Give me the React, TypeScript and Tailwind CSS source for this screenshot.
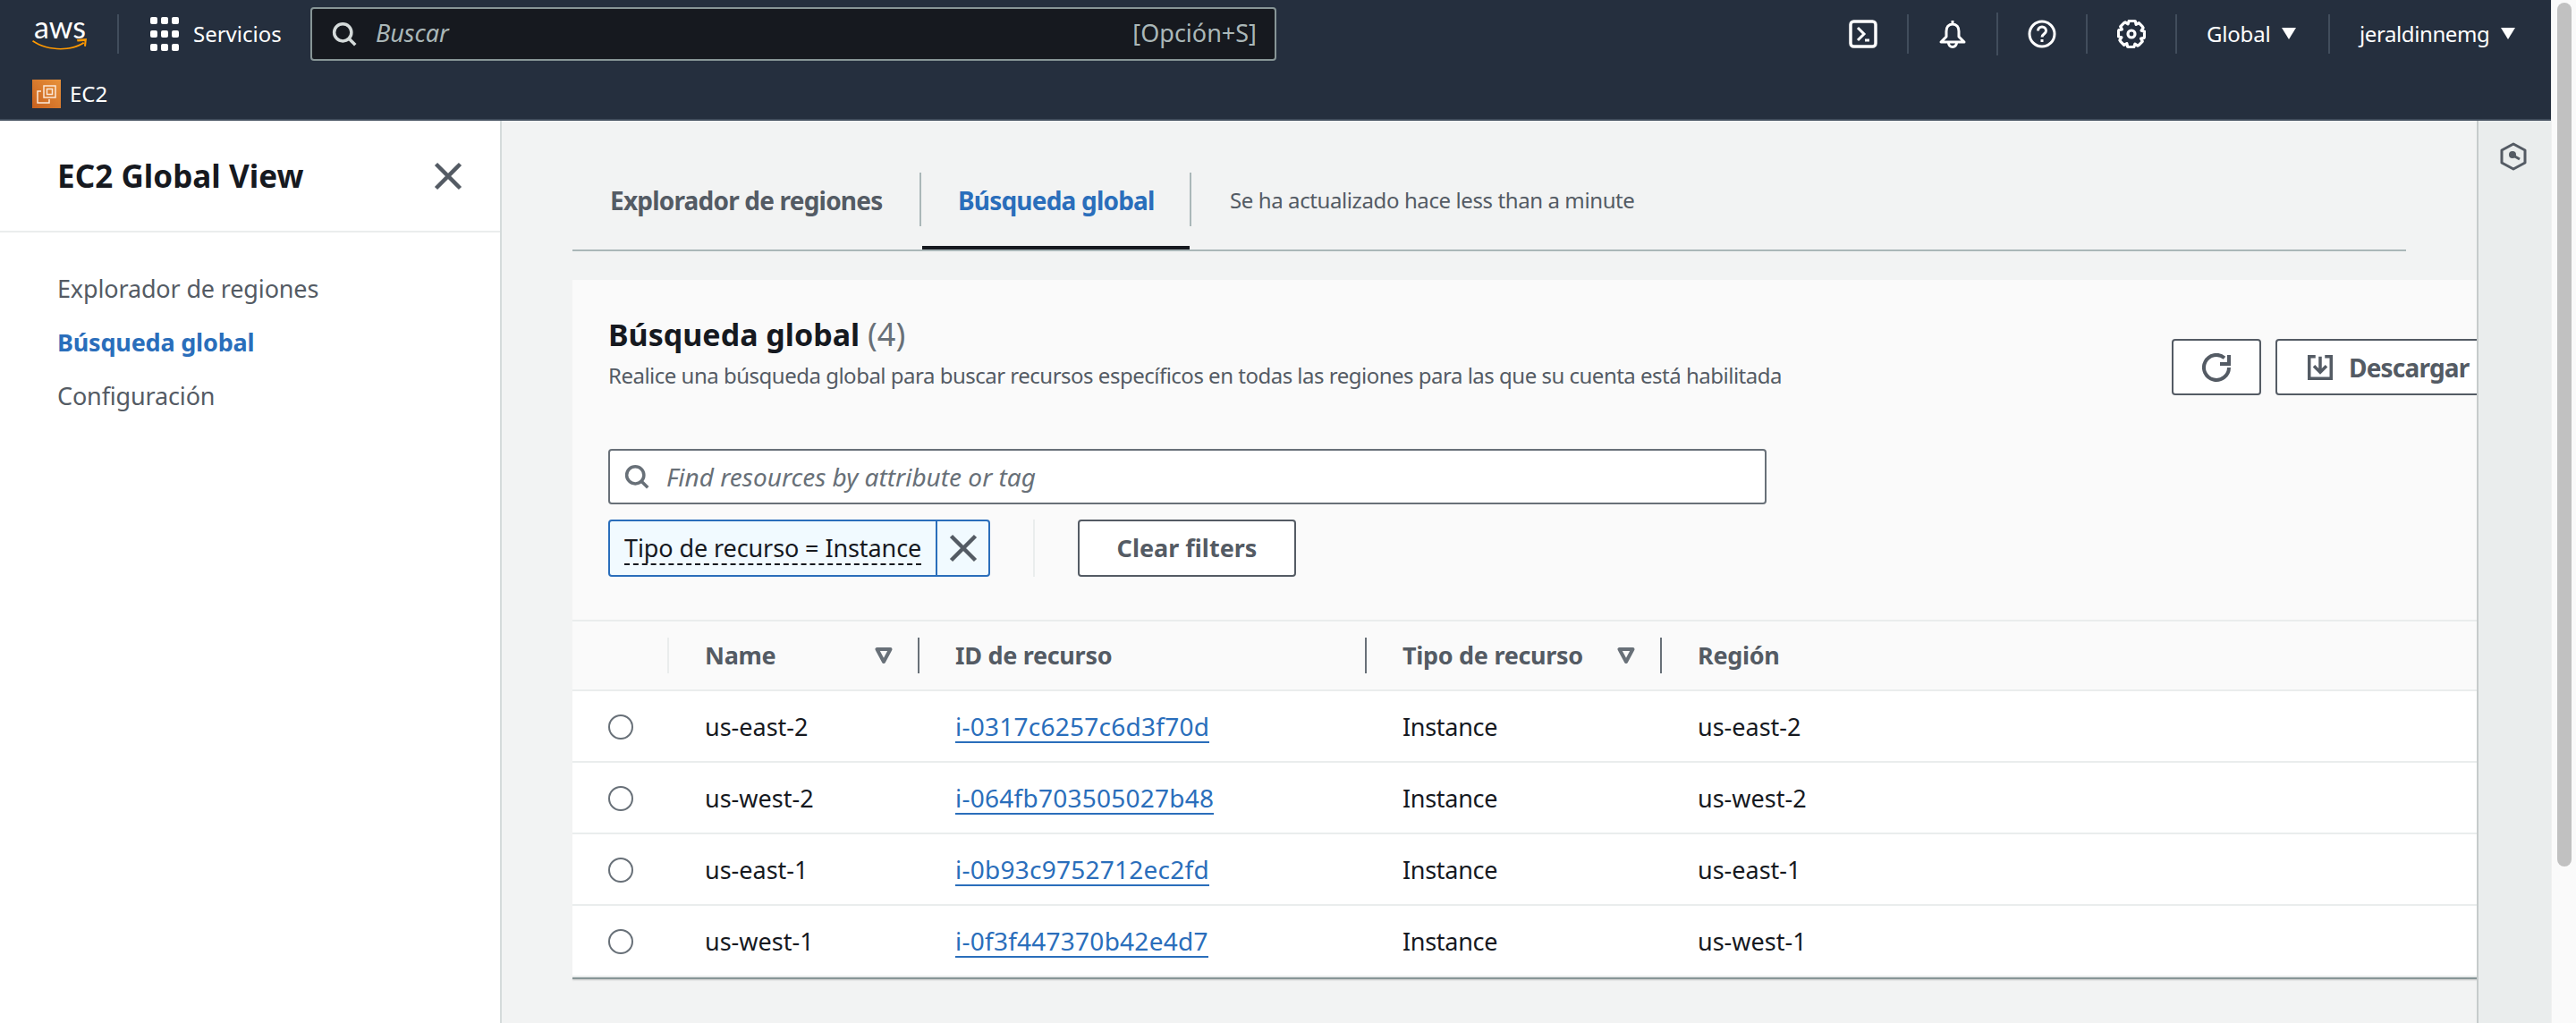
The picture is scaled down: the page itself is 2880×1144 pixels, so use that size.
import React from 'react';

const stroke = { fill: 'none', stroke: 'currentColor', strokeWidth: 2, strokeLinecap: 'round', strokeLinejoin: 'round' } as const;

const Icon: React.FC<{ className?: string; children: React.ReactNode; sw?: number }> = ({ className, children, sw = 2 }) => (
  <svg viewBox="0 0 16 16" className={className} {...stroke} strokeWidth={sw}>
    {children}
  </svg>
);

const SearchIcon: React.FC<{ className?: string }> = ({ className }) => (
  <Icon className={className}>
    <circle cx="7" cy="7" r="5.5" />
    <path d="m15 15-4.2-4.2" strokeLinecap="butt" />
  </Icon>
);

const CloseIcon: React.FC<{ className?: string }> = ({ className }) => (
  <Icon className={className}>
    <path d="m2 2 12 12M14 2 2 14" strokeLinecap="butt" />
  </Icon>
);

const Caret = () => (
  <svg viewBox="0 0 16 13" className="w-4 h-[13px] shrink-0 fill-white">
    <path d="M0 0h16L8 13z" />
  </svg>
);

const FilterCaret = () => (
  <svg viewBox="0 0 20 20" className="w-5 h-5 shrink-0 text-[#687078]" fill="none" stroke="currentColor" strokeWidth="4">
    <path d="M2.500 3h15L10 17z" strokeLinejoin="round" />
  </svg>
);

// 8 tooth gear outline
const gearPath = () => {
  const pts: string[] = [];
  for (let i = 0; i < 8; i++) {
    const a = (i * Math.PI) / 4;
    [[-0.19, 7.4], [0.19, 7.4], [0.3, 7.4], [0.45, 5.9]].forEach(([o, r]) => {
      pts.push(`${(8 + r * Math.sin(a + o)).toFixed(2)} ${(8 - r * Math.cos(a + o)).toFixed(2)}`);
    });
  }
  return `M${pts.join('L')}z`;
};

const HeaderSep = ({ tall }: { tall?: boolean }) => <div className={`w-0.5 bg-[#414d5c] shrink-0 ${tall ? 'h-12' : 'h-11'}`} />;

const TopBar = () => (
  <div className="h-[135px] bg-[#252f3e] border-b-2 border-[#414d5c] text-white shrink-0">
    <div className="h-[75px] flex items-center pl-9 pr-10">
      <div className="w-[62px] h-[40px] relative shrink-0 -mt-1">
        <span className="block text-center text-[34px] leading-[28px] font-['Lato',sans-serif]">aws</span>
        <svg viewBox="0 0 62 16" className="absolute left-0 top-[26px] w-[62px] h-4" fill="#ff9900">
          <path d="M1 3c16 11 41 12 56 2l1.500 1.500C44 16 17 16 0 4.500z" />
          <path d="M50 2l11-1-1 9-2-.5.500-5.500-8 .5z" />
        </svg>
      </div>
      <div className="w-0.5 h-11 bg-[#414d5c] ml-[33px] mr-[35px] shrink-0" />
      <div className="grid grid-cols-3 gap-[4px] w-8 shrink-0">
        {Array.from({ length: 9 }).map((_, i) => (
          <div key={i} className="h-[8px] w-[8px] bg-white rounded-[2px] my-[1.500px]" />
        ))}
      </div>
      <span className="ml-4 text-[24px] leading-none w-[100px] shrink-0">Servicios</span>
      <div className="ml-[31px] w-[1080px] h-[60px] bg-[#16191f] border-2 border-[#879596] rounded-[4px] flex items-center pl-[22px] pr-5 shrink-0">
        <SearchIcon className="w-[28px] h-[28px] text-[#d5dbdb] shrink-0" />
        <span className="ml-[21px] text-[27px] italic text-[#aab7b8]">Buscar</span>
        <span className="ml-auto text-[27px] text-[#aab7b8]">[Opción+S]</span>
      </div>
      <div className="flex items-center ml-[640px]">
        <svg viewBox="0 0 32 32" className="w-8 h-8 shrink-0" fill="none" stroke="white" strokeWidth="3.500">
          <rect x="2" y="2" width="28" height="28" rx="3.500" />
          <path d="M10 9l7 7-7 7" strokeWidth="3" />
          <path d="M18 23h5" strokeWidth="3" />
        </svg>
        <div className="ml-[33px] mr-[33px]"><HeaderSep /></div>
        <svg viewBox="0 0 32 32" className="w-8 h-8 shrink-0" fill="none" stroke="white" strokeWidth="3">
          <path d="M16 1v4M16 5c-4.500 0-7 3.500-7 8v6l-6 6h26l-6-6v-6c0-4.500-2.500-8-7-8z" strokeLinejoin="round" />
          <path d="M11.500 26a4.500 4.500 0 0 0 9 0" />
        </svg>
        <div className="ml-[33px] mr-[33px]"><HeaderSep tall /></div>
        <svg viewBox="0 0 32 32" className="w-8 h-8 shrink-0" fill="none" stroke="white" strokeWidth="3">
          <circle cx="16" cy="16" r="14" />
          <path d="M11.500 12.500c0-6 9-6 9 0 0 3.500-4.500 3.500-4.500 7" strokeWidth="3" />
          <path d="M16 22v3" strokeWidth="3" />
        </svg>
        <div className="ml-[33px] mr-[33px]"><HeaderSep /></div>
        <svg viewBox="0 0 16 16" className="w-8 h-8 shrink-0" fill="none" stroke="white" strokeWidth="1.600" strokeLinejoin="round">
          <path d={gearPath()} />
          <circle cx="8" cy="8" r="2" />
        </svg>
        <div className="ml-[33px] mr-[33px]"><HeaderSep /></div>
        <span className="text-[24px] leading-none w-[72px] tracking-[-0.2px]">Global</span>
        <div className="ml-3"><Caret /></div>
        <div className="ml-9 mr-[33px]"><HeaderSep /></div>
        <span className="text-[24px] leading-none w-[146px] tracking-[-0.4px]">jeraldinnemg</span>
        <div className="ml-3"><Caret /></div>
      </div>
    </div>
    <div className="h-[58px] flex items-start pt-[14px] pl-9">
      <div className="w-8 h-[32px] bg-gradient-to-tr from-[#c8611f] to-[#e8923a] flex items-center justify-center shrink-0">
        <svg viewBox="0 0 32 32" className="w-8 h-8" fill="none" stroke="#fbe9d9" strokeWidth="1.500">
          <rect x="13" y="7" width="13" height="13" />
          <rect x="16.500" y="10.500" width="6" height="6" />
          <path d="M10 13H6v13h13v-4" />
        </svg>
      </div>
      <span className="ml-[10px] text-[24px] leading-8">EC2</span>
    </div>
  </div>
);

const Sidebar = () => (
  <div className="w-[561px] shrink-0 bg-white border-r-2 border-[#d5dbdb]">
    <div className="h-[125px] border-b-2 border-[#eaeded] flex items-center justify-between pl-16 pr-10">
      <h1 className="text-[35px] font-bold text-[#16191f] tracking-[0.05px] pt-px">EC2 Global View</h1>
      <CloseIcon className="w-9 h-9 text-[#545b64]" />
    </div>
    <nav className="pt-[45px] pl-16 flex flex-col gap-[24px] text-[27px] leading-[36px] tracking-[-0.15px] text-[#545b64]">
      <span>Explorador de regiones</span>
      <span className="font-bold text-[#2a6ebb] tracking-[-0.2px]">Búsqueda global</span>
      <span>Configuración</span>
    </nav>
  </div>
);

const Tabs = () => (
  <div className="w-[2050px] h-[146px] border-b-2 border-[#aab7b8] flex text-[#545b64]">
    <div className="w-[388px] pl-[42px] pt-[69px] text-[28px] leading-[40px] font-bold tracking-[-0.8px]">Explorador de regiones</div>
    <div className="w-0.5 h-[60px] mt-[58px] bg-[#aab7b8]" />
    <div className="w-[299px] ml-px border-b-4 border-[#16191f] pl-10 pt-[69px] text-[28px] leading-[40px] font-bold tracking-[-0.8px] text-[#2a6ebb]">Búsqueda global</div>
    <div className="w-0.5 h-[60px] mt-[58px] bg-[#aab7b8]" />
    <div className="pl-[43px] pt-[71px] text-[24px] leading-[36px] tracking-[-0.4px]">Se ha actualizado hace less than a minute</div>
  </div>
);

const rows = [
  ['us-east-2', 'i-0317c6257c6d3f70d'],
  ['us-west-2', 'i-064fb703505027b48'],
  ['us-east-1', 'i-0b93c9752712ec2fd'],
  ['us-west-1', 'i-0f3f447370b42e4d7'],
];

const ColSep = () => <div className="w-0.5 h-10 bg-[#687078] shrink-0" />;

const ResourceTable = () => (
  <div className="text-[27px] text-[#16191f]">
    <div className="h-20 border-y-2 border-[#eaeded] grid grid-cols-[148px_280px_500px_330px_1fr] items-center font-bold tracking-[-0.3px] text-[#545b64]">
      <div className="flex justify-end pr-10">
        <div className="w-0.5 h-10 bg-[#eaeded]" />
      </div>
      <div className="flex items-center pr-10">
        <span>Name</span>
        <div className="ml-auto mr-[28px]"><FilterCaret /></div>
        <ColSep />
      </div>
      <div className="flex items-center justify-between pr-10">
        <span>ID de recurso</span>
        <ColSep />
      </div>
      <div className="flex items-center pr-10">
        <span>Tipo de recurso</span>
        <div className="ml-auto mr-[28px]"><FilterCaret /></div>
        <ColSep />
      </div>
      <span>Región</span>
    </div>
    {rows.map(([name, id]) => (
      <div key={id} className="h-20 bg-white border-b-2 border-[#eaeded] last:border-b-0 pt-0.5 grid grid-cols-[148px_280px_500px_330px_1fr] items-center">
        <div className="pl-10">
          <div className="w-7 h-7 rounded-full border-2 border-[#687078] bg-white" />
        </div>
        <span>{name}</span>
        <div>
          <span className="text-[28px] tracking-[0.25px] text-[#2a6ebb] border-b-2 border-[#2a6ebb] leading-[34px] inline-block">{id}</span>
        </div>
        <span className="tracking-[-0.3px]">Instance</span>
        <span>{name}</span>
      </div>
    ))}
    <div className="h-0.5 bg-[#879596] shadow-[0_1px_2px_rgba(0,0,0,0.2)]" />
  </div>
);

const Card = () => (
  <div className="mt-8 w-[2300px] bg-[#fafafa]">
    <div className="h-[189px] flex pl-10">
      <div className="w-[1748px] shrink-0 pt-[38px]">
        <h2 className="text-[34px] leading-[46px] font-bold text-[#16191f]">
          Búsqueda global <span className="font-normal text-[36px] text-[#687078]">(4)</span>
        </h2>
        <p className="mt-[5px] text-[24px] leading-[36px] tracking-[-0.5px] text-[#545b64]">
          Realice una búsqueda global para buscar recursos específicos en todas las regiones para las que su cuenta está habilitada
        </p>
      </div>
      <div className="flex gap-4 pt-[66px] shrink-0 items-start">
        <button className="w-[100px] h-[63px] bg-white border-2 border-[#545b64] rounded-[4px] flex items-center justify-center text-[#545b64]">
          <svg viewBox="0 0 16 16" className="w-8 h-8" fill="none" stroke="currentColor" strokeWidth="2">
            <path d="M15 8a7 7 0 1 1-2.500-5.400" />
            <path d="M15 1v5h-5" />
          </svg>
        </button>
        <button className="w-[260px] h-[63px] bg-white border-2 border-[#545b64] rounded-[4px] flex items-center pl-[34px] text-[#545b64] font-bold text-[28px] tracking-[-0.8px]">
          <svg viewBox="0 0 16 16" className="w-7 h-7 shrink-0" fill="none" stroke="currentColor" strokeWidth="2">
            <path d="M5 1H1v14h14V1h-4" />
            <path d="M8 1v9M4 7l4 4 4-4" />
          </svg>
          <span className="ml-[18px]">Descargar</span>
        </button>
      </div>
    </div>
    <div className="pl-10">
      <div className="w-[1295px] h-[62px] bg-white border-2 border-[#687078] rounded-[4px] flex items-center pl-4">
        <SearchIcon className="w-[28px] h-[28px] text-[#687078]" />
        <span className="ml-[19px] text-[28px] italic text-[#687078]">Find resources by attribute or tag</span>
      </div>
      <div className="mt-[17px] h-[64px] flex items-stretch">
        <div className="w-[427px] border-2 border-[#2a6ebb] bg-[#f1faff] rounded-[4px] flex items-center">
          <div className="w-[364px] pl-4 text-[27px] tracking-[-0.1px] text-[#16191f]">
            <span className="border-b-2 border-dashed border-[#16191f] leading-[34px] inline-block">Tipo de recurso = Instance</span>
          </div>
          <div className="w-0.5 h-full bg-[#2a6ebb]" />
          <div className="flex-1 flex justify-center">
            <CloseIcon className="w-9 h-9 text-[#545b64]" />
          </div>
        </div>
        <div className="w-0.5 bg-[#eaeded] ml-[48px]" />
        <button className="ml-[48px] w-[244px] bg-white border-2 border-[#545b64] rounded-[4px] text-[27px] font-bold text-[#545b64]">Clear filters</button>
      </div>
    </div>
    <div className="mt-[48px]">
      <ResourceTable />
    </div>
  </div>
);

export default function App() {
  return (
    <div className="w-[2880px] h-[1144px] flex overflow-hidden font-['Noto_Sans',sans-serif] bg-white">
      <div className="w-[2852px] flex flex-col shrink-0">
        <TopBar />
        <div className="flex-1 flex min-h-0">
          <Sidebar />
          <div className="flex-1 min-w-0 overflow-hidden bg-[#f2f3f3] pl-[79px]">
            <Tabs />
            <Card />
          </div>
          <div className="w-[83px] shrink-0 bg-[#eaeded] border-l-2 border-[#c6cbcb] pt-6 pl-[24px]">
            <svg viewBox="0 0 30 32" className="w-[30px] h-8 text-[#545b64]" fill="none" stroke="currentColor" strokeWidth="3">
              <path d="M15 2l13 7v14l-13 7-13-7V9z" strokeLinejoin="round" />
              <circle cx="14" cy="14" r="4" fill="currentColor" stroke="none" />
              <path d="M15 15l7 4" />
            </svg>
          </div>
        </div>
      </div>
      <div className="w-7 shrink-0 bg-[#fafafa] border-l border-[#f0f0f0] pl-[6px] pt-[3px]">
        <div className="w-4 h-[966px] rounded-full bg-[#c1c1c1]" />
      </div>
    </div>
  );
}
